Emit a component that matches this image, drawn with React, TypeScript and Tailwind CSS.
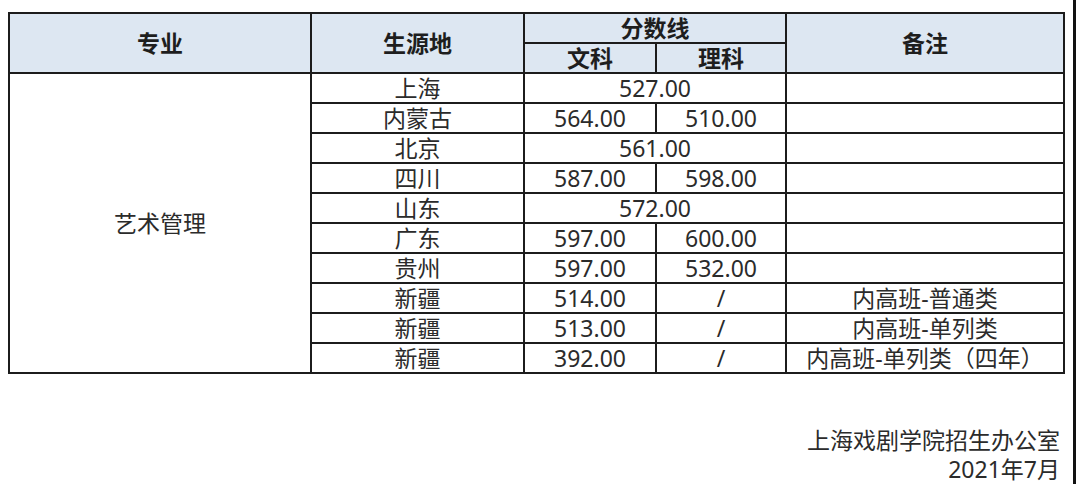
import React from "react";

type Row = { place: string; wen: string; li?: string; note?: string };

const rows: Row[] = [
  { place: "上海", wen: "527.00" },
  { place: "内蒙古", wen: "564.00", li: "510.00" },
  { place: "北京", wen: "561.00" },
  { place: "四川", wen: "587.00", li: "598.00" },
  { place: "山东", wen: "572.00" },
  { place: "广东", wen: "597.00", li: "600.00" },
  { place: "贵州", wen: "597.00", li: "532.00" },
  { place: "新疆", wen: "514.00", li: "/", note: "内高班-普通类" },
  { place: "新疆", wen: "513.00", li: "/", note: "内高班-单列类" },
  { place: "新疆", wen: "392.00", li: "/", note: "内高班-单列类（四年）" },
];

const cell = "border-2 border-[#1c1c1c] p-0 text-center align-middle whitespace-nowrap";

export default function App() {
  return (
    <div className="w-[1076px] h-[484px] bg-white border-r-[3px] border-[#111] overflow-hidden font-['Noto_Sans','Noto_Sans_CJK_SC',sans-serif] text-[#2b2b2b]">
      <div className="pt-[12px] pl-[8px]">
        <table className="table-fixed border-collapse w-[1055px] text-[23px] leading-none">
          <colgroup>
            <col className="w-[302px]" />
            <col className="w-[213px]" />
            <col className="w-[132px]" />
            <col className="w-[130px]" />
            <col className="w-[278px]" />
          </colgroup>
          <thead className="bg-[#dde7f2] font-bold text-[#1e1e1e]">
            <tr className="h-[30px]">
              <th rowSpan={2} className={cell}>专业</th>
              <th rowSpan={2} className={cell}>生源地</th>
              <th colSpan={2} className={cell}>分数线</th>
              <th rowSpan={2} className={cell}>备注</th>
            </tr>
            <tr className="h-[30px]">
              <th className={cell}>文科</th>
              <th className={cell}>理科</th>
            </tr>
          </thead>
          <tbody>
            {rows.map((r, i) => (
              <tr key={i} className="h-[30px]">
                {i === 0 && (
                  <td rowSpan={rows.length} className={cell}>
                    艺术管理
                  </td>
                )}
                <td className={cell}>{r.place}</td>
                {r.li ? (
                  <>
                    <td className={cell}>{r.wen}</td>
                    <td className={cell}>{r.li}</td>
                  </>
                ) : (
                  <td colSpan={2} className={cell}>
                    {r.wen}
                  </td>
                )}
                <td className={cell}>{r.note ?? ""}</td>
              </tr>
            ))}
          </tbody>
        </table>
      </div>
      <div className="mt-[52px] pr-[13px] text-right text-[23px] leading-[29px]">
        <div>上海戏剧学院招生办公室</div>
        <div>2021年7月</div>
      </div>
    </div>
  );
}
